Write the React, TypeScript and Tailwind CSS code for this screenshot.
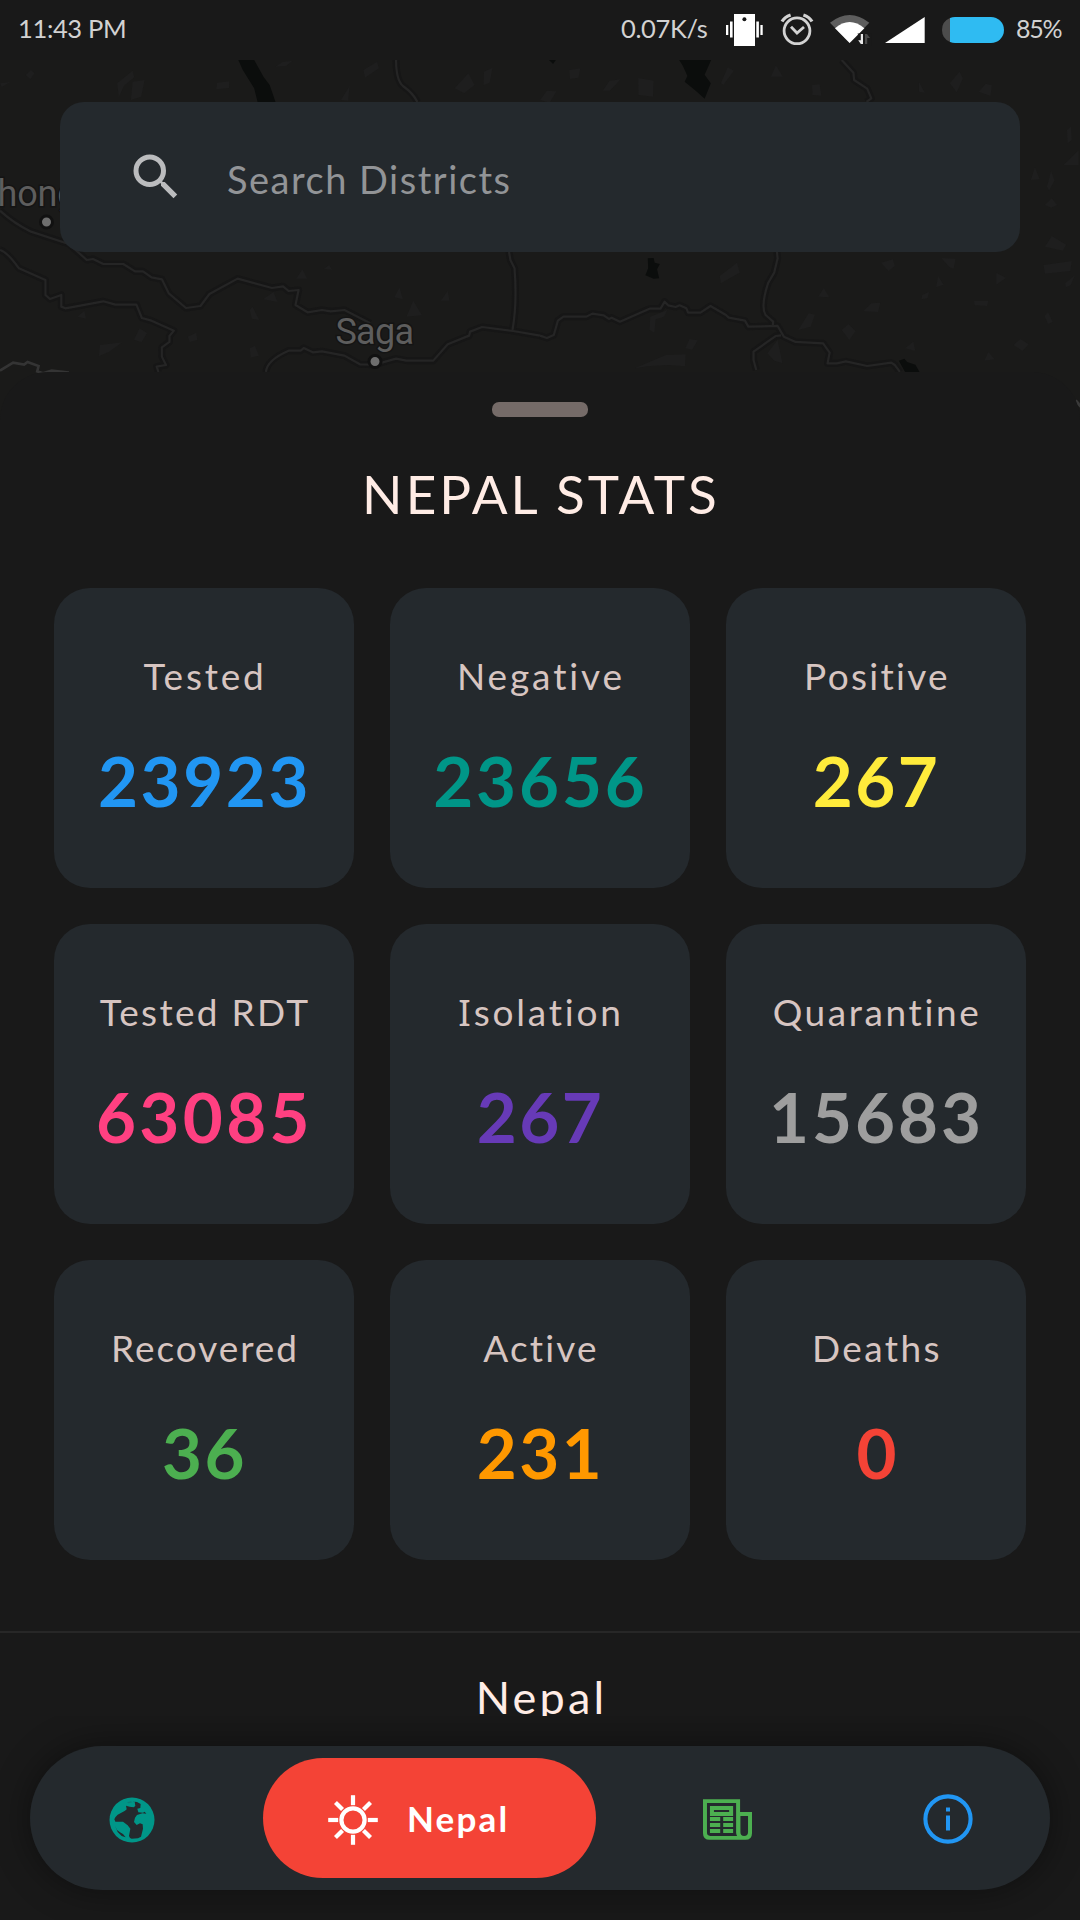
import type { ReactNode } from "react";
import { MdSearch } from "react-icons/md";

type Stat = { label: ReactNode; labelClass: string; value: string; valueClass: string };

const STATS: Stat[] = [
  { label: "Tested", labelClass: "tracking-[2.8px]", value: "23923", valueClass: "text-[#2196f3] tracking-[2.6px]" },
  { label: "Negative", labelClass: "tracking-[2.9px]", value: "23656", valueClass: "text-[#009688] tracking-[2.9px]" },
  { label: "Positive", labelClass: "tracking-[2.3px]", value: "267", valueClass: "text-[#ffeb3b] tracking-[2.5px]" },
  { label: "Tested RDT", labelClass: "tracking-[2.3px]", value: "63085", valueClass: "text-[#ff4081] tracking-[3.4px]" },
  {
    label: (
      <>
        <span className="font-['Noto_Sans']">I</span>solation
      </>
    ),
    labelClass: "tracking-[2.8px]",
    value: "267",
    valueClass: "text-[#673ab7] tracking-[2.5px]",
  },
  { label: "Quarantine", labelClass: "tracking-[2.6px]", value: "15683", valueClass: "text-[#9e9e9e] tracking-[3px]" },
  { label: "Recovered", labelClass: "tracking-[1.95px]", value: "36", valueClass: "text-[#4caf50] tracking-[2.5px]" },
  { label: "Active", labelClass: "tracking-[2.2px]", value: "231", valueClass: "text-[#ff9800] tracking-[2.5px]" },
  { label: "Deaths", labelClass: "tracking-[2.4px]", value: "0", valueClass: "text-[#f44336]" },
];

function StatusBar() {
  return (
    <header className="flex h-[60px] shrink-0 items-center bg-[#191919] pl-[18px] text-[25.5px] leading-[30px] tracking-[-0.35px] text-[#d2d2d2]">
      <span className="-mt-[4px] w-[603px]">11:43 PM</span>
      <span className="-mt-[4px] w-[99px]">0.07K/s</span>
      <svg className="h-[60px] w-[290px] shrink-0" viewBox="720 0 290 60">
        <g fill="#fff">
          <rect x="734" y="14" width="21" height="32" />
          <rect x="726" y="25" width="2.3" height="10" />
          <rect x="730" y="21.5" width="2.6" height="16" />
          <rect x="756.3" y="21.5" width="2.6" height="16" />
          <rect x="760.4" y="25" width="2.3" height="10" />
        </g>
        <circle cx="744.4" cy="19.2" r="2" fill="#191919" />
        <g fill="none" stroke="#d2d2d2">
          <circle cx="797" cy="30.8" r="12.9" strokeWidth="2.8" />
          <path d="M791 26.8l6 6.2 7-6" strokeWidth="2.8" />
          <path d="M782 21.5q2.5-4.6 8.6-6.6M812 21.5q-2.5-4.6-8.6-6.6" strokeWidth="3.2" />
        </g>
        <path d="M849.6 43L830 22.7q19.6-15.4 39.3 0z" fill="#5e5e5e" />
        <path d="M849.6 43L835 28.3q14.6-12.6 29.4 0z" fill="#fff" />
        <path d="M857.5 33.5h14V46h-8.5z" fill="#191919" />
        <path d="M860.8 34h2.2v10h-2.2l-2.6-3.8h2.6z" fill="#e8e8e8" />
        <path d="M865 34h2l3 4h-2.8v6H865z" fill="#4a4a4a" />
        <path d="M885 43h39.7V17z" fill="#fff" />
        <path d="M950 18A13 13 0 0 0 950 42z" fill="#4c4c4c" />
        <path d="M950 18Q952.4 17 955 17H991a13 13 0 0 1 0 26H955Q952.4 43 950 42z" fill="#2fbbf2" />
      </svg>
      <span className="-mt-[5px] pl-[6px] text-[25px] tracking-[-1.2px]">85%</span>
    </header>
  );
}

/* Each half of the map is drawn on its own 1568x1110 grid. */
const ROADS_WEST = [
  "M0 482Q40 520 90 545Q150 565 200 582L252 630L270 627L300 642H358L392 664H415L440 682L470 688L490 730L540 774L582 768L608 732L690 686L790 714L822 709L838 723L867 720L858 765L893 787L935 780L960 784L1000 780L1075 820",
  "M0 600Q20 605 55 655L132 690V735L145 747L178 735V770L190 775L300 754L335 764H396L412 804L440 812L505 842L492 858V876L470 892V920L482 945L455 950L460 966",
  "M772 966Q775 930 838 902H873L882 894L908 907L935 904L1000 917L1045 943L1088 944L1150 926L1180 932H1258L1300 883L1362 857L1365 845L1400 831L1490 843L1568 857",
  "M1478 606L1482 630L1494 655Q1502 760 1488 840",
  "M1150 30Q1150 90 1170 108Q1200 130 1212 156",
];
const ROADS_EAST = [
  "M0 857L20 864L40 855L52 812L68 800H135L152 791L185 796L200 807L208 803L232 815L318 776H350L362 755L372 766L394 771L405 766L425 775L430 788H466L495 768L540 795L548 803L595 812L605 830L690 828L708 860L742 876L822 880L841 908L835 940H862L888 934L950 948L1020 938L1030 945L1045 966",
  "M688 606L690 625L680 668L662 700Q640 770 655 795L677 815L676 826",
  "M700 856L685 858L620 905V930L628 960",
  "M876 30L910 68L912 90L950 116L962 145L948 156",
];
const SCRUB_WEST = [
  "M800 50l20-14 30-4-20 16zM340 100l45-38 5 20-30 25-15 35zM385 95l35-5-10 50-30 10zM630 98l35-4v20l-37 4zM1055 60l40-25 5 20-40 28zM1320 115l40-45 18 35-30 25zM1405 65l25-12-8 45-18 8zM75 75l15-15 10 10-12 18zM0 100l30-4-25 15z",
  "M860 686l18-28 14 28zM940 657l16-12 8 14zM764 748l30-22 12 30zM725 780l8-10 20 40-22-4zM290 885l65-8-38 28-30 14zM405 835l22 14-16 28-22-8zM545 860l25-12 3 22-22 6zM725 895l15-8 12 30-24 6zM1145 742l15-30 10 36zM1280 752l20-30 5 30zM225 800l20-18 5 24zM1180 800l20-48 25 44zM990 150l25-42-4 44z",
];
const SCRUB_EAST = [
  "M85 60l32-5-5 28-25 4zM182 122l20-30 32-4-20 22-12 12zM285 84l45 8-2 48-42-5zM525 100l20-48 18 10-30 42zM670 80l15-34 20 34zM0 150l20-28 28 2-20 34zM1190 100l28-35 10 20-18 42zM1274 125l20-24 18 5-4 32zM1100 125v-30l18 34zM790 105l22-2 5 34-26-2zM1250 178l30-14 8 12z",
  "M522 678l50-40 8 30-55 32zM990 638l35-10 5 20-18 15zM1165 624l42 2-6 30-12-4zM1462 645l82-12-4 30-74 8zM1325 668l28 16-28 20zM1150 712l6-34 16 26zM938 784l24-24 26-2-6 28zM320 800l50-20-10 20-24 8-4 40-14-8zM750 840l30-50 18 4-12 36zM876 840l20-18 20 22-18 26zM1465 798l10-12 14 30-14 6zM422 895l12-28 24 4-16 28zM1375 885l20-18 24 16-18 20zM275 955l90-40 58-2-2 36-50-4-60 4zM1290 932l12-26 18 22zM1060 895l24-20 6 28zM808 740l16-26 16 28zM660 910l30-40 14 70-24-8zM1520 345l44-44v44zM1425 390l12-38 14 36zM1472 410l12-48 10 30-16 30zM1466 465l20-20 16 20-18 8zM1466 590l20-32 42 26-10 18zM1530 240l12-10 2 40-12 10zM1110 735l20-10-5 20-18 3zM1260 752h42l-4 16-36-2zM1525 700l28-24-12 30-14 6z",
];

function Roads({ paths }: { paths: string[] }) {
  return (
    <g fill="none" strokeLinejoin="round">
      {paths.map((d) => (
        <path key={d} d={d} stroke="#161616" strokeWidth="7" vectorEffect="non-scaling-stroke" />
      ))}
      {paths.map((d) => (
        <path key={d} d={d} stroke="#252525" strokeWidth="2.2" vectorEffect="non-scaling-stroke" />
      ))}
    </g>
  );
}

function MapBackdrop() {
  return (
    <svg className="absolute inset-0 h-full w-full" viewBox="0 0 1080 360">
      <rect width="1080" height="360" fill="#1a1a19" />
      <g transform="translate(0 -10) scale(.3444 .3333)">
        {SCRUB_WEST.map((d) => (
          <path key={d} d={d} fill="#1e1e1e" />
        ))}
        <path d="M692 30H738L765 80L783 105L800 156H748L738 115L705 60z" fill="#0b0d0c" />
        <Roads paths={ROADS_WEST} />
        <path d="M0 962L38 938L70 944L80 936L112 948L108 964L125 970L150 962L200 968" fill="none" stroke="#343434" strokeWidth="2.6" vectorEffect="non-scaling-stroke" />
      </g>
      <g transform="translate(540 -10) scale(.3444 .3333)">
        {SCRUB_EAST.map((d) => (
          <path key={d} d={d} fill="#1e1e1e" />
        ))}
        <path d="M404 30H497L478 74L496 100L478 146L452 122L420 95L428 78L415 48zM26 30H46L38 42zM313 625L330 624L333 638L348 642L340 658L346 685L330 686L306 676L314 655z" fill="#0b0d0c" />
        <Roads paths={ROADS_EAST} />
        <path d="M1042 932L1058 926L1066 936L1090 944L1102 966H1060z" fill="#0b0d0c" />
        <path d="M1555 1052L1580 1080" fill="none" stroke="#3a3a3a" strokeWidth="3" vectorEffect="non-scaling-stroke" />
      </g>
      <g fill="#5d5d5d" stroke="#141414" strokeWidth="3" paintOrder="stroke" className="font-['Roboto']" fontSize="36">
        <text x="-2.5" y="145.5" textLength="80">hong</text>
        <text x="335.5" y="284" textLength="78.5">Saga</text>
      </g>
      <g fill="#6e6e6e" stroke="#111" strokeWidth="3">
        <circle cx="46.5" cy="162" r="6" />
        <circle cx="375" cy="301.5" r="6" />
      </g>
    </svg>
  );
}

function StatCard({ label, labelClass, value, valueClass }: Stat) {
  return (
    <div className="flex h-[300px] flex-col items-center rounded-[36px] bg-[#24292d] pt-[68px]">
      <div className={`pl-[2px] text-[37px] leading-[40px] whitespace-nowrap text-[#d7c5c1] ${labelClass}`}>{label}</div>
      <div className={`mt-[45px] pl-[1px] text-[69px] leading-[80px] font-bold ${valueClass}`}>{value}</div>
    </div>
  );
}

function GlobeIcon() {
  return (
    <svg className="h-[46px] w-[46px]" viewBox="14 13 138 138">
      <circle cx="83" cy="82" r="67.5" fill="#009688" />
      <path
        d="M33 74L40 66L62 54L67 50L65 39L76 42L88 44L93 40L91 27L98 28L109 34L108 46L99 48L102 59L116 60L121 57L126 63L114 62L98 67L92 75L89 88L97 97L107 92L115 95L116 108L110 132L101 137L82 138L77 136L74 130L78 108L70 98L56 87L33 87L30 80zM32 100L38 112L47 119L56 124L64 134L52 130L40 118z"
        fill="#24292d"
      />
      <path d="M68 29l12-3 4 3-12 3zM86 25l6 1-4 3z" fill="#0b7f76" />
    </svg>
  );
}

function SunIcon() {
  return (
    <svg className="h-[50px] w-[50px]" viewBox="-25 -25 50 50" fill="none" stroke="#fff" strokeWidth="4.2">
      <circle r="11.6" />
      {[0, 45, 90, 135, 180, 225, 270, 315].map((angle) => (
        <path key={angle} d="M0-14.8V-24.8" transform={`rotate(${angle})`} />
      ))}
    </svg>
  );
}

function NewsIcon() {
  return (
    <svg className="h-[41px] w-[49px]" viewBox="188 177 148 123" fill="#4caf50">
      <path
        fillRule="evenodd"
        d="M188 177H300V216H336V280Q336 300 316 300H208Q188 300 188 280zM200 189V278Q200 288 210 288H291Q288 284 288 278V189zM301 228V276Q301 288 312 288Q324 288 324 276V228z"
      />
      <path fillRule="evenodd" d="M209 198H279V228H209zM221 210V216H267V210z" />
      <path d="M209 231H240V243H209zM249 231H279V243H249zM209 249H240V261H209zM249 249H279V261H249zM209 267H240V279H209zM249 267H279V279H249z" />
    </svg>
  );
}

function InfoIcon() {
  return (
    <svg className="h-[50px] w-[50px]" viewBox="-25 -25 50 50">
      <circle r="22.6" fill="none" stroke="#2196f3" strokeWidth="4.1" />
      <path d="M-2-11.5H2V-7.5H-2zM-2-3.5H2V11.5H-2z" fill="#2196f3" />
    </svg>
  );
}

function BottomNav() {
  return (
    <footer className="relative h-[204px] shrink-0 overflow-hidden bg-[#191919] px-[30px] pt-[30px]">
      <nav className="flex h-[144px] items-center rounded-full bg-[#24292d] shadow-[0_0_36px_rgba(0,0,0,0.42)]">
        <button className="mt-[3px] ml-[79px]">
          <GlobeIcon />
        </button>
        <button className="ml-[108px] flex h-[120px] w-[333px] items-center rounded-full bg-[#f44336] pl-[65px]">
          <span className="mt-[3px]">
            <SunIcon />
          </span>
          <span className="ml-[29px] text-[35px] leading-[40px] font-bold tracking-[2.2px] text-white">Nepal</span>
        </button>
        <button className="mt-[3px] ml-[107px]">
          <NewsIcon />
        </button>
        <button className="mt-[2px] ml-[171px]">
          <InfoIcon />
        </button>
      </nav>
    </footer>
  );
}

export default function App() {
  return (
    <div className="flex h-[1920px] w-[1080px] flex-col overflow-hidden bg-[#191919] font-['Lato',sans-serif]">
      <StatusBar />
      <section className="relative -mb-[48px] h-[360px] shrink-0 px-[60px] pt-[42px]">
        <MapBackdrop />
        <div className="relative flex h-[150px] items-center rounded-[24px] bg-[#24292d] pl-[66px]">
          <MdSearch className="h-[60px] w-[60px] text-[#bbbcbe]" />
          <span className="mt-[3px] ml-[41px] text-[38px] leading-[50px] tracking-[1.5px] text-[#929497]">Search Districts</span>
        </div>
      </section>
      <main className="relative flex min-h-0 flex-1 flex-col overflow-hidden rounded-t-[48px] bg-[#191919]">
        <div className="mx-auto mt-[30px] h-[15px] w-[96px] shrink-0 rounded-[7px] bg-[#756b68]" />
        <h1 className="mt-[47px] pl-[2px] text-center text-[53px] leading-[60px] tracking-[3.1px] text-[#ffece5]">NEPAL STATS</h1>
        <div className="mt-[64px] grid shrink-0 grid-cols-3 gap-[36px] px-[54px]">
          {STATS.map((s, i) => (
            <StatCard key={i} {...s} />
          ))}
        </div>
        <div className="mt-[71px] h-[2px] shrink-0 bg-[#272727]" />
        <h2 className="mt-[39px] shrink-0 pl-[3px] text-center text-[45px] leading-[50px] tracking-[3.2px] text-[#ffece5]">Nepal</h2>
      </main>
      <BottomNav />
    </div>
  );
}
